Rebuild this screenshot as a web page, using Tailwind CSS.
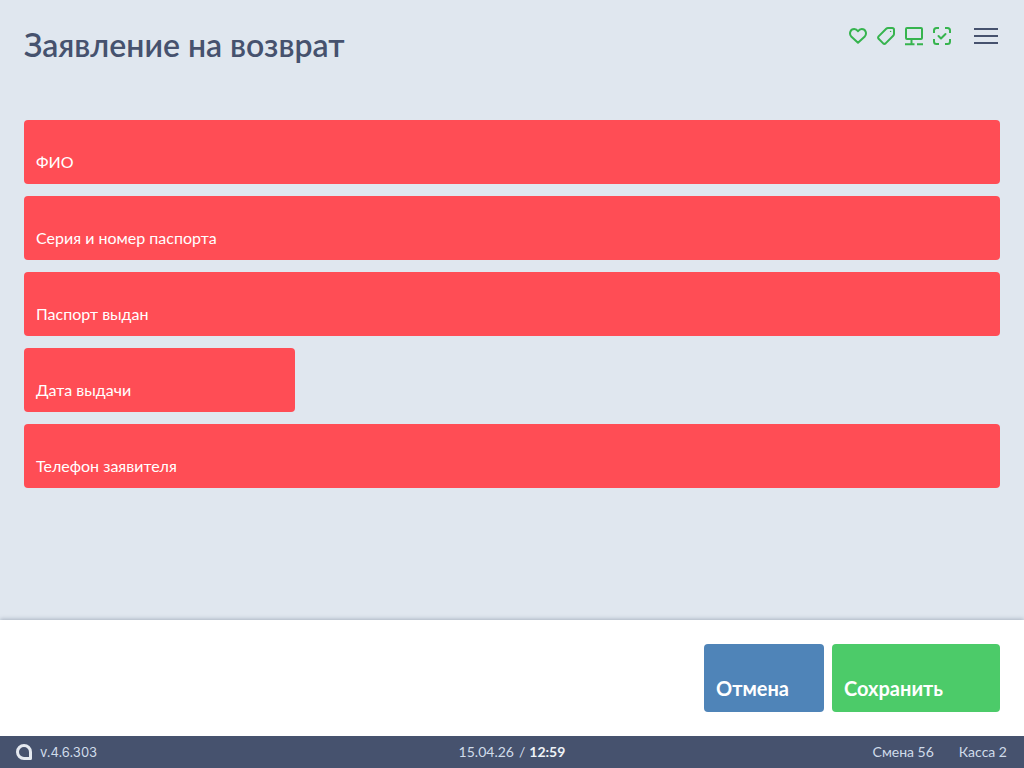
<!DOCTYPE html>
<html lang="ru">
<head>
  <meta charset="UTF-8" />
  <title>Заявление на возврат</title>
  <script src="https://cdn.jsdelivr.net/npm/@tailwindcss/browser@4"></script>
</head>
<body class="bg-[#e0e7ef] font-['Lato','Noto_Sans',sans-serif]">
  <div class="h-[768px] w-[1024px] flex flex-col overflow-hidden">
    <main class="h-[620px] px-6 flex flex-col">
      <header class="h-[120px] flex justify-between">
        <h1 class="mt-[25px] text-[32px] leading-[40px] font-semibold text-[#46526e]">Заявление на возврат</h1>
        <div class="flex items-start mt-[27px]">
          <div class="flex gap-[10px] text-[#36b44e]">
            <svg class="w-[18px] h-[18px]" viewBox="0 0 18 18" fill="none" stroke="currentColor" stroke-width="2" stroke-linejoin="round"><path d="M9 15.8 L2.2 9.4 C-0.2 6.6 1.4 2 5.2 2 C6.9 2 8.2 3 9 4.2 C9.8 3 11.1 2 12.8 2 C16.6 2 18.2 6.6 15.8 9.4 Z"/></svg>
            <svg class="w-[18px] h-[18px]" viewBox="0 0 18 18" fill="none" stroke="currentColor" stroke-width="2" stroke-linejoin="round"><path d="M1.6 9.4 L9.2 1.8 Q10 1 11 1 H15.2 Q17 1 17 2.8 V7 Q17 8 16.2 8.8 L8.6 16.4 Q7.4 17.4 6.2 16.4 L1.6 11.8 Q0.6 10.6 1.6 9.4 Z"/><circle cx="13.6" cy="4.4" r="0.7" fill="currentColor" stroke="none"/></svg>
            <svg class="w-[18px] h-[18px] overflow-visible" viewBox="0 0 18 18" fill="none" stroke="currentColor" stroke-width="2"><rect x="1" y="1" width="16" height="11" rx="1"/><path d="M6.5 12 V17 M0 17.2 H9.5 M12 17.2 H18"/></svg>
            <svg class="w-[18px] h-[18px]" viewBox="0 0 18 18" fill="none" stroke="currentColor" stroke-width="2"><path d="M1 6 V3.5 Q1 1 3.5 1 H6 M12 1 H14.5 Q17 1 17 3.5 V6 M17 12 V14.5 Q17 17 14.5 17 H12 M6 17 H3.5 Q1 17 1 14.5 V12"/><path d="M5.5 9 L8 11.5 L12.5 7" stroke-linecap="round" stroke-linejoin="round"/></svg>
          </div>
          <div class="ml-[23px] mr-[2px] w-6 flex flex-col gap-[5px] mt-[1px]">
            <span class="h-[2px] bg-[#46526e]"></span>
            <span class="h-[2px] bg-[#46526e]"></span>
            <span class="h-[2px] bg-[#46526e]"></span>
          </div>
        </div>
      </header>
      <form class="flex flex-col gap-3 text-white text-base">
        <div class="h-16 rounded bg-[#ff4d55] px-3 pb-[10px] flex items-end leading-6">ФИО</div>
        <div class="h-16 rounded bg-[#ff4d55] px-3 pb-[10px] flex items-end leading-6">Серия и номер паспорта</div>
        <div class="h-16 rounded bg-[#ff4d55] px-3 pb-[10px] flex items-end leading-6">Паспорт выдан</div>
        <div class="h-16 w-[271px] rounded bg-[#ff4d55] px-3 pb-[10px] flex items-end leading-6">Дата выдачи</div>
        <div class="h-16 rounded bg-[#ff4d55] px-3 pb-[10px] flex items-end leading-6">Телефон заявителя</div>
      </form>
    </main>
    <section class="h-[116px] bg-white shadow-[0_-1px_4px_rgba(70,82,110,0.35)] flex justify-end gap-2 pt-6 pr-6">
      <button class="w-[120px] h-[68px] rounded bg-[#4f84b8] text-white text-xl font-bold text-left px-3 pb-3 flex items-end leading-6">Отмена</button>
      <button class="w-[168px] h-[68px] rounded bg-[#4ccb69] text-white text-xl font-bold text-left px-3 pb-3 flex items-end leading-6">Сохранить</button>
    </section>
    <footer class="h-8 bg-[#46526e] text-[#d0dcea] text-sm grid grid-cols-3 items-center px-4">
      <div class="flex items-center gap-2">
        <svg class="w-4 h-4" viewBox="0 0 16 16" fill="none" stroke="#e4e9f0" stroke-width="3"><path d="M14.5 14.5 H8 A6.5 6.5 0 1 1 14.5 8 Z" stroke-linejoin="round"/></svg>
        <span class="font-['Inter',sans-serif] text-[13px]">v.4.6.303</span>
      </div>
      <div class="text-center flex justify-center gap-[5px]"><span>15.04.26</span><span>/</span><b class="font-bold text-[#eef2f7] -ml-[1px]">12:59</b></div>
      <div class="flex justify-end gap-[25px] pr-px"><span>Смена 56</span><span>Касса 2</span></div>
    </footer>
  </div>
</body>
</html>
